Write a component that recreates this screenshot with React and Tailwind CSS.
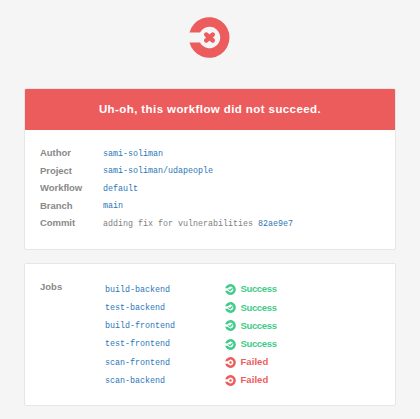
const details = [
  { label: 'Author', link: 'sami-soliman' },
  { label: 'Project', link: 'sami-soliman/udapeople' },
  { label: 'Workflow', link: 'default' },
  { label: 'Branch', link: 'main' },
  { label: 'Commit', text: 'adding fix for vulnerabilities ', link: '82ae9e7' },
];

const jobs = [
  { name: 'build-backend', ok: true },
  { name: 'test-backend', ok: true },
  { name: 'build-frontend', ok: true },
  { name: 'test-frontend', ok: true },
  { name: 'scan-frontend', ok: false },
  { name: 'scan-backend', ok: false },
];

const mono = "font-['Liberation_Mono',monospace] text-[8.33px] whitespace-pre";

function Ring() {
  return (
    <path
      fill="currentColor"
      d="M.5 15.6A20.3 20.3 0 1 1 .5 25.4H11A10.7 10.7 0 1 0 11 15.6Z"
    />
  );
}

function Logo() {
  return (
    <svg className="mr-px h-[41px] w-[41px] text-[#ed5c5c]" viewBox="0 0 41 41">
      <Ring />
      <path d="M17.2 17.5l6.6 6M23.8 17.5l-6.6 6" stroke="currentColor" strokeWidth="4.4" strokeLinecap="round" />
    </svg>
  );
}

function StatusIcon({ ok }) {
  return (
    <svg className="h-[11px] w-[11px] shrink-0" viewBox="0 0 41 41">
      <Ring />
      {ok ? (
        <path d="M13 20l6 5 9-9" fill="none" stroke="currentColor" strokeWidth="4.5" />
      ) : (
        <circle cx="20.5" cy="20.5" r="4.6" fill="currentColor" />
      )}
    </svg>
  );
}

export default function App() {
  return (
    <div className="flex h-[419px] w-[420px] flex-col items-center overflow-hidden bg-[#f5f5f5] pt-[17px] font-['Liberation_Sans',Arial,sans-serif]">
      <Logo />
      <section className="mt-[30px] h-[162px] w-[372px] rounded-[2px] border border-[#e6e6e6] bg-white">
        <h1 className="flex h-[41px] items-center justify-center rounded-t-[1px] bg-[#ed5c5c] text-[11.5px] font-bold tracking-[0.41px] whitespace-nowrap text-white">
          Uh-oh, this workflow did not succeed.
        </h1>
        <dl className="pt-[14.5px] pl-[15px]">
          {details.map((d) => (
            <div key={d.label} className="flex h-[17.5px] items-center">
              <dt className="w-[63px] text-[9.5px] font-bold tracking-[-0.05px] text-[#898989]">{d.label}</dt>
              <dd className={`${mono} pt-px text-[#808080]`}>
                {d.text}
                <a className="text-[#2a76b9]">{d.link}</a>
              </dd>
            </div>
          ))}
        </dl>
      </section>
      <section className="mt-[13px] flex h-[143px] w-[372px] rounded-[2px] border border-[#e6e6e6] bg-white pt-[16.5px] pl-[15px]">
        <h2 className="w-[65px] pt-[0.5px] text-[9.5px] leading-[12px] font-bold text-[#898989]">Jobs</h2>
        <ul>
          {jobs.map((j) => (
            <li key={j.name} className="flex h-[18.2px] items-center">
              <a className={`${mono} w-[119.5px] pt-px text-[#2a76b9]`}>{j.name}</a>
              <span className={`flex items-center gap-[5px] text-[9.5px] font-bold ${j.ok ? 'tracking-[-0.35px] text-[#3fcb88]' : 'tracking-[0.05px] text-[#ed5c5c]'}`}>
                <StatusIcon ok={j.ok} />
                {j.ok ? 'Success' : 'Failed'}
              </span>
            </li>
          ))}
        </ul>
      </section>
    </div>
  );
}
